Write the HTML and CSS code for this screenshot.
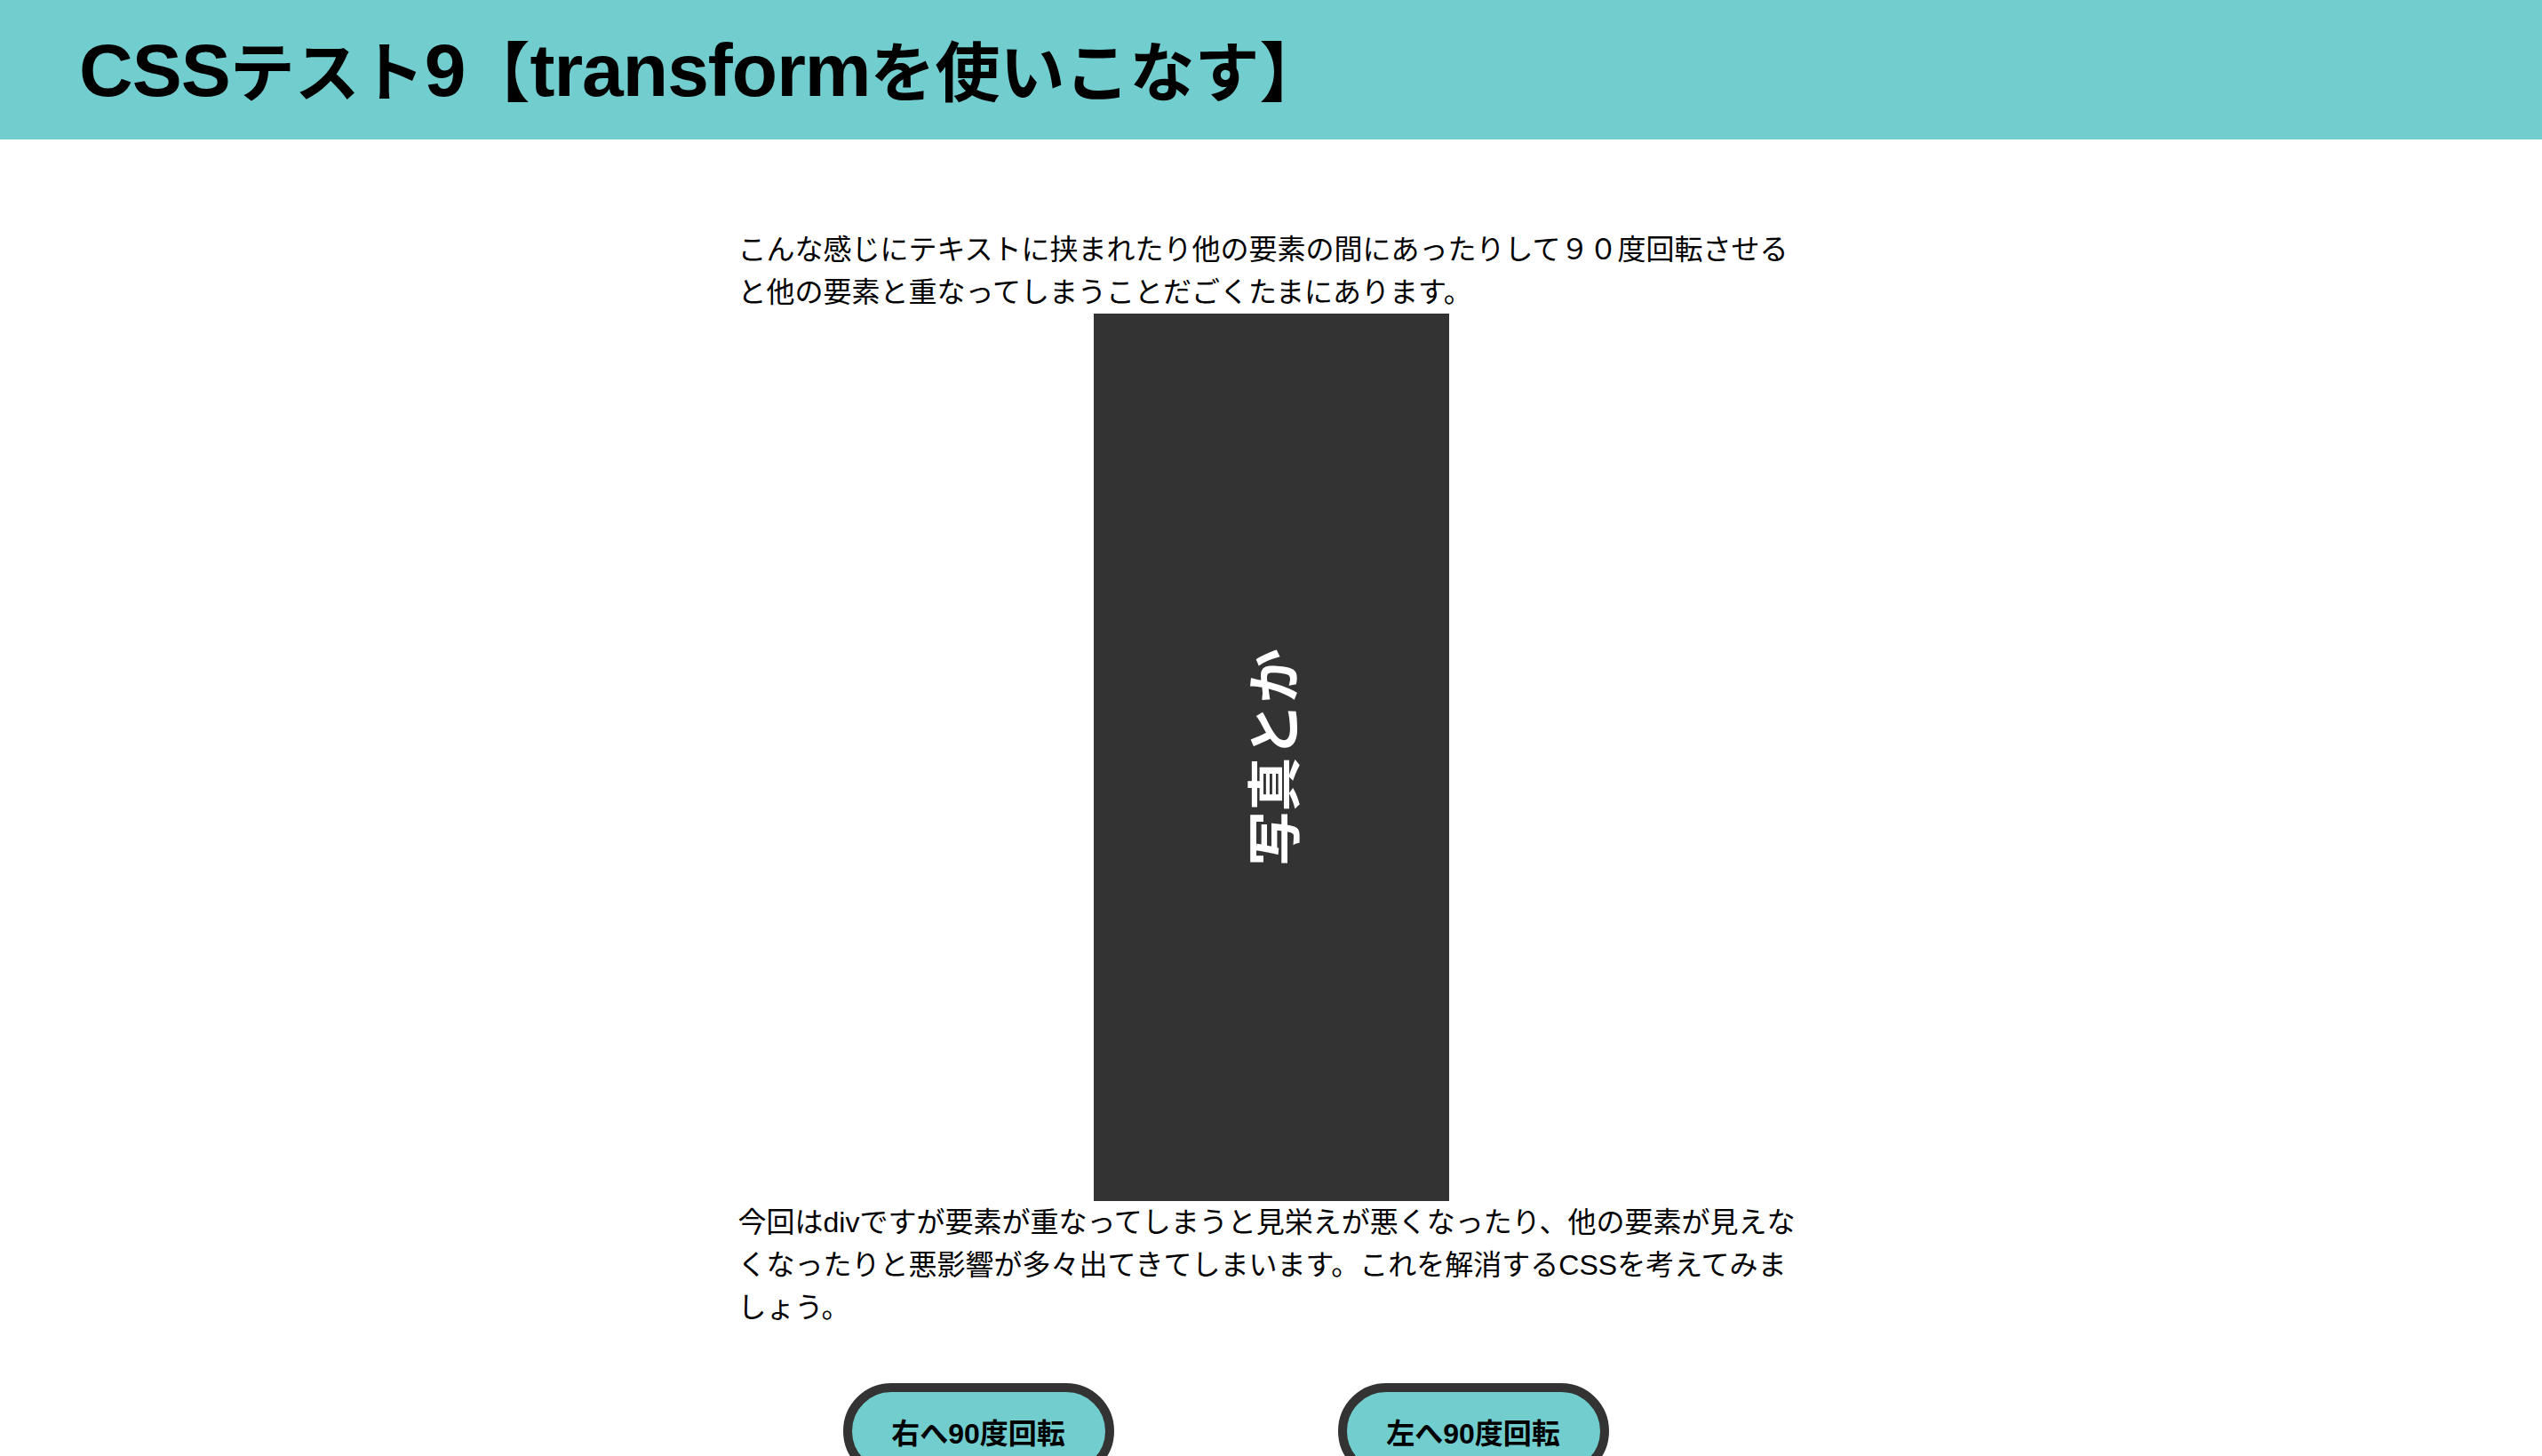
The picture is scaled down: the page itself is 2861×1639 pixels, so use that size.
FILE: index.html
```html
<!DOCTYPE html>
<html lang="ja">
<head>
<meta charset="utf-8">
<title>CSSテスト9【transformを使いこなす】</title>
<link rel="stylesheet" href="styles.css">
</head>
<body>
<header class="site-header">
  <h1 class="site-title"><span class="en">CSS</span>テスト<span class="en">9</span>【<span class="en">transform</span>を使いこなす】</h1>
</header>
<main class="content">
  <p class="text">こんな感じにテキストに挟まれたり他の要素の間にあったりして９０度回転させると他の要素と重なってしまうことだごくたまにあります。</p>
  <div class="photo"><span class="photo-label">写真とか</span></div>
  <p class="text">今回はdivですが要素が重なってしまうと見栄えが悪くなったり、他の要素が見えなくなったりと悪影響が多々出てきてしまいます。これを解消するCSSを考えてみましょう。</p>
  <div class="buttons">
    <button class="btn" type="button">右へ90度回転</button>
    <button class="btn" type="button">左へ90度回転</button>
  </div>
</main>
</body>
</html>
```
FILE: styles.css
```css
html, body {
  margin: 0;
  padding: 0;
  background: #ffffff;
}
body {
  font-family: "Liberation Sans", "Noto Sans CJK JP", sans-serif;
  color: #000;
  overflow: hidden;
}
.site-header {
  height: 157px;
  background: #72cdce;
  display: flex;
  align-items: center;
  padding: 0 0 0 89px;
  box-sizing: border-box;
}
.site-title {
  margin: 0;
  font-size: 73px;
  line-height: 1;
  font-weight: 700;
  white-space: nowrap;
}
.site-title .en {
  font-size: 84px;
  letter-spacing: -1px;
}
.content {
  width: 1200px;
  margin: 0 auto;
  padding-top: 100px;
}
.text {
  margin: 0;
  font-size: 32px;
  line-height: 48px;
}
.photo {
  width: 400px;
  height: 999px;
  margin: 0 auto;
  background: #333333;
  display: flex;
  align-items: center;
  justify-content: center;
}
.photo-label {
  color: #fff;
  font-family: "Noto Sans CJK JP", sans-serif;
  font-weight: 700;
  font-size: 61px;
  white-space: nowrap;
  transform: rotate(-90deg);
}
.buttons {
  display: flex;
  gap: 252px;
  padding-left: 118px;
  margin-top: 61px;
}
.btn {
  width: 305px;
  height: 108px;
  border: 10px solid #333333;
  border-radius: 54px;
  background: #72cdce;
  font-family: "Liberation Sans", "Noto Sans CJK JP", sans-serif;
  font-weight: 700;
  font-size: 32px;
  color: #000;
  padding: 0;
  box-sizing: border-box;
}
```
